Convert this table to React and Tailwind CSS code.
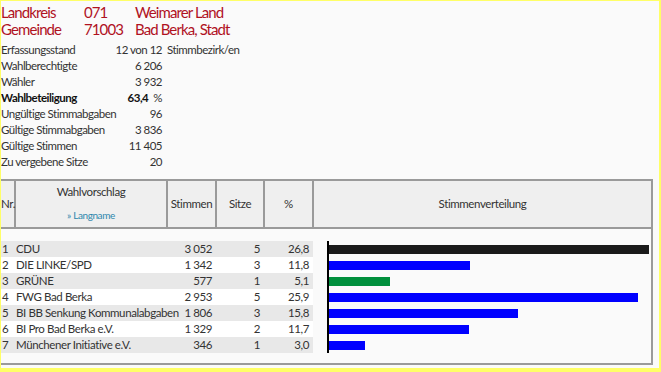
import React from 'react';

const stats = [
  { label: 'Erfassungsstand', value: '12 von 12', unit: 'Stimmbezirk/en' },
  { label: 'Wahlberechtigte', value: '6 206' },
  { label: 'Wähler', value: '3 932' },
  { label: 'Wahlbeteiligung', value: '63,4', unit: '%', bold: true },
  { label: 'Ungültige Stimmabgaben', value: '96' },
  { label: 'Gültige Stimmabgaben', value: '3 836' },
  { label: 'Gültige Stimmen', value: '11 405' },
  { label: 'Zu vergebene Sitze', value: '20' },
];

const parties = [
  { nr: 1, name: 'CDU', votes: '3 052', seats: 5, pct: 26.8, color: 'bg-[#1a1a1a]' },
  { nr: 2, name: 'DIE LINKE/SPD', votes: '1 342', seats: 3, pct: 11.8, color: 'bg-[#0000ff]' },
  { nr: 3, name: 'GRÜNE', votes: '577', seats: 1, pct: 5.1, color: 'bg-[#008f3c]' },
  { nr: 4, name: 'FWG Bad Berka', votes: '2 953', seats: 5, pct: 25.9, color: 'bg-[#0000ff]' },
  { nr: 5, name: 'BI BB Senkung Kommunalabgaben', votes: '1 806', seats: 3, pct: 15.8, color: 'bg-[#0000ff]' },
  { nr: 6, name: 'BI Pro Bad Berka e.V.', votes: '1 329', seats: 2, pct: 11.7, color: 'bg-[#0000ff]' },
  { nr: 7, name: 'Münchener Initiative e.V.', votes: '346', seats: 1, pct: 3.0, color: 'bg-[#0000ff]' },
];

const fmt = (n) => n.toFixed(1).replace('.', ',');

export default function App() {
  return (
    <div className="w-[661px] h-[372px] overflow-hidden bg-[#fafafa] border-l border-t border-r-2 border-b-4 border-[#ffff66] font-['Lato',sans-serif] text-[#333]">
      {/* Kopf */}
      <div className="grid grid-cols-[83px_51px_auto] text-[15px] leading-[17px] tracking-[-0.9px] text-[#b0121f] pt-[3px]">
        <span>Landkreis</span>
        <span>071</span>
        <span>Weimarer Land</span>
        <span>Gemeinde</span>
        <span>71003</span>
        <span>Bad Berka, Stadt</span>
      </div>

      <div className="mt-[4px] grid grid-cols-[108px_53px_auto] text-[11.5px] leading-[16px] tracking-[-0.5px] text-[#333] whitespace-nowrap">
        {stats.map((s) => (
          <React.Fragment key={s.label}>
            <span className={s.bold ? 'font-bold text-[#111]' : ''}>{s.label}</span>
            <span className="text-right">
              {s.bold ? (
                <>
                  <b className="text-[#111]">{s.value}</b>
                  <span className="ml-[5px]">{s.unit}</span>
                </>
              ) : (
                s.value
              )}
            </span>
            <span className="pl-[5px]">{!s.bold && s.unit}</span>
          </React.Fragment>
        ))}
      </div>

      {/* Tabelle */}
      <table className="mt-[9px] w-[652px] table-fixed border-collapse text-[11.5px] tracking-[-0.4px] text-[#333]">
        <colgroup>
          <col className="w-[14px]" />
          <col className="w-[152px]" />
          <col className="w-[49px]" />
          <col className="w-[48px]" />
          <col className="w-[49px]" />
          <col />
        </colgroup>
        <thead>
          <tr className="h-[48px] bg-[#efefef] border-y-2 border-[#9a9a9a]">
            <th className="font-normal text-left border-r-2 border-[#9a9a9a]">Nr.</th>
            <th className="font-normal border-r-2 border-[#9a9a9a] align-top pt-[2px]">
              <div>Wahlvorschlag</div>
              <div className="mt-[8px] text-[10px] text-[#2d87ad]">» Langname</div>
            </th>
            <th className="font-normal border-r-2 border-[#9a9a9a]">Stimmen</th>
            <th className="font-normal border-r-2 border-[#9a9a9a]">Sitze</th>
            <th className="font-normal border-r-2 border-[#9a9a9a]">%</th>
            <th className="font-normal border-r-2 border-[#9a9a9a]">Stimmenverteilung</th>
          </tr>
        </thead>
        <tbody>
          <tr className="h-[13px]">
            <td colSpan={5} />
            <td className="border-r-2 border-[#9a9a9a]" />
          </tr>
          {parties.map((p, i) => (
            <tr key={p.nr} className="h-[16px] leading-[16px]">
              <td className={`pl-[1px] ${i % 2 === 0 ? 'bg-[#e8e8e8]' : 'bg-white'}`}>{p.nr}</td>
              <td className={`pl-[1px] whitespace-nowrap ${i % 2 === 0 ? 'bg-[#e8e8e8]' : 'bg-white'}`}>{p.name}</td>
              <td className={`text-right pr-[4px] ${i % 2 === 0 ? 'bg-[#e8e8e8]' : 'bg-white'}`}>{p.votes}</td>
              <td className={`text-right pr-[4px] ${i % 2 === 0 ? 'bg-[#e8e8e8]' : 'bg-white'}`}>{p.seats}</td>
              <td className={`text-right pr-[4px] ${i % 2 === 0 ? 'bg-[#e8e8e8]' : 'bg-white'}`}>{fmt(p.pct)}</td>
              <td className="border-r-2 border-[#9a9a9a] p-0">
                <div className="ml-[14px] h-[16px] border-l-2 border-black flex items-center">
                  <div className={`h-[9px] ${p.color}`} style={{ width: `${(p.pct / 26.8) * 320}px` }} />
                </div>
              </td>
            </tr>
          ))}
          <tr className="h-[11px] border-b-2 border-[#9a9a9a]">
            <td colSpan={5} />
            <td className="border-r-2 border-[#9a9a9a]" />
          </tr>
        </tbody>
      </table>
    </div>
  );
}
